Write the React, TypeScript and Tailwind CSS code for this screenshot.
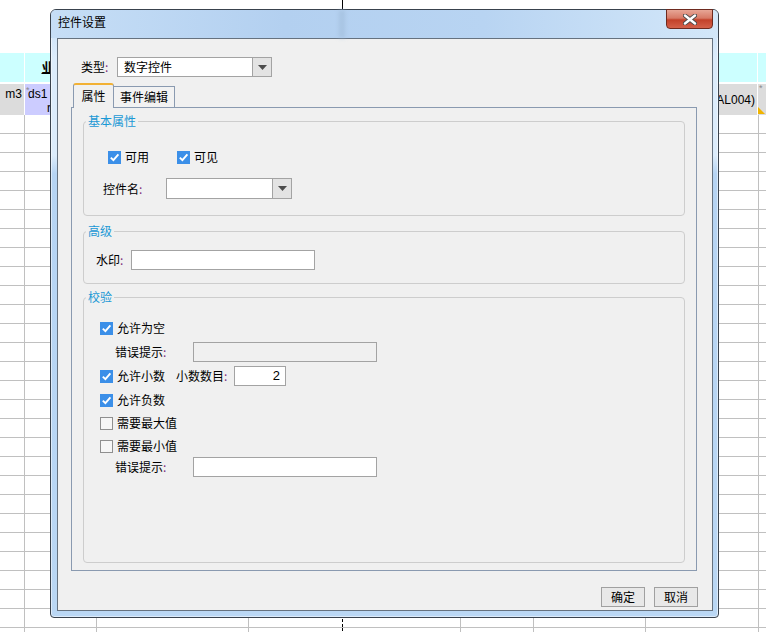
import React from 'react';

const GRID_CELLS = [
  'w-[25px] border-r border-[#c0c0c0]',
  'w-[72px] border-r border-[#c0c0c0]',
  'w-[152px] border-r border-[#c0c0c0]',
  'w-[94px] border-r border-dashed border-black',
  'w-[118px] border-r border-[#c0c0c0]',
  'w-[73px] border-r border-[#c0c0c0]',
  'w-[112px] border-r border-[#c0c0c0]',
  'w-[113px] border-r border-[#c0c0c0]',
  'flex-1',
];

const ROWS = Array.from({ length: 28 }, (_, i) => i);

// ── spreadsheet behind the dialog ──
function Sheet() {
  return (
    <div className="flex flex-col text-[12px] leading-[14px] text-black">
      <div className="flex h-[53px]">
        <div className="w-[342px]" />
        <div className="w-px bg-black" />
      </div>

      <div className="flex h-[29px] bg-[#ccffff]">
        <div className="w-[25px] border-r border-white" />
        <div className="flex w-[72px] items-center justify-center">
          <span className="text-[13px] font-bold underline">业务员</span>
        </div>
        <div className="w-[661px] border-r border-white" />
        <div className="flex-1" />
      </div>

      <div className="h-[2px]" />

      <div className="flex h-[31px]">
        <div className="w-[25px] border-r border-white bg-[#dcdcdc] pt-[3px] pr-[2px] text-right">m3</div>
        <div className="relative w-[72px] border-r border-white bg-[#ccccff] pt-[3px] pl-[3px]">
          <span className="absolute left-[1px] top-[-1px] text-[9px] text-[#8a8a8a]">*</span>
          <div>ds1 数量</div>
          <div className="pl-[19px]">rq)</div>
        </div>
        <div className="w-[548px]" />
        <div className="w-[113px] overflow-hidden border-r border-white bg-[#dcdcdc] pt-[9px] pr-[2px] text-right whitespace-nowrap">
          COUNT(AL004)
        </div>
        <div className="flex flex-1 flex-col justify-between bg-[#dcdcdc] pb-[1px]">
          <span className="-mt-[1px] pl-[1px] text-[9px] leading-[10px] text-[#8a8a8a]">*</span>
          <svg className="block" width="7" height="7" viewBox="0 0 7 7">
            <path d="M0 0L7 7H0z" fill="#f0b400" />
          </svg>
        </div>
      </div>

      {ROWS.map((r) => (
        <div key={r} className="flex h-[19px] border-b border-[#c0c0c0]">
          {GRID_CELLS.map((c, i) => (
            <div key={i} className={c} />
          ))}
        </div>
      ))}
    </div>
  );
}

function Colon() {
  return <span className="text-[#7d2e7d]">:</span>;
}

function Box({ on }: { on?: boolean }) {
  if (!on) return <span className="block h-[13px] w-[13px] shrink-0 border border-[#8f8f8f] bg-[#f6f6f6]" />;
  return (
    <span className="flex h-[13px] w-[13px] shrink-0 items-center justify-center bg-[#3b8fe8]">
      <svg width="11" height="11" viewBox="0 0 11 11">
        <path d="M1.8 5.6 L4.4 8.2 L9.4 2.4" fill="none" stroke="#fff" strokeWidth="1.9" />
      </svg>
    </span>
  );
}

function Combo({ className, value }: { className: string; value?: string }) {
  return (
    <div className={`flex border border-[#a3a3a3] bg-white ${className}`}>
      <div className="flex flex-1 items-center pl-[6px]">{value}</div>
      <div className="flex w-[19px] items-center justify-center border-l border-[#a3a3a3] bg-[#e3e3e3]">
        <svg width="9" height="5" viewBox="0 0 9 5">
          <path d="M0 0h9L4.5 5z" fill="#4b4b4b" />
        </svg>
      </div>
    </div>
  );
}

function Group({ title, className, children }: { title: string; className: string; children: React.ReactNode }) {
  return (
    <fieldset className={`mx-[11px] rounded-[4px] border border-[#cdcdcd] ${className}`}>
      <legend className="ml-[2px] px-[2px] text-[12px] leading-[16px] text-[#1a98d5]">{title}</legend>
      {children}
    </fieldset>
  );
}

function CheckRow({ on, label, className = '' }: { on?: boolean; label: string; className?: string }) {
  return (
    <div className={`flex items-center gap-[4px] ${className}`}>
      <Box on={on} />
      <span>{label}</span>
    </div>
  );
}

// ── dialog ──
function Dialog() {
  return (
    <div className="absolute left-[50px] top-[9px] flex h-[609px] w-[669px] flex-col rounded-t-[6px] rounded-b-[4px] border border-[#39424d] bg-[linear-gradient(180deg,#c6def6_0%,#dcecfb_8%,#dcecfb_24%,#b6d4f3_27%,#bad7f4_100%)] font-['Noto_Sans_CJK_SC',sans-serif] text-[12px] leading-[16px] text-black shadow-[0_0_0_1px_rgba(255,255,255,0.5)_inset]">
      <div className="relative h-[28px] rounded-t-[5px] bg-[linear-gradient(90deg,#c6def6,#b3d0f0_35%,#b8d4f2_65%,#d3e7f9)] pt-[4px] pl-[7px]">
        控件设置
        <div className="absolute left-[288px] top-0 h-full w-[6px] bg-[#9fbbd8] opacity-60 blur-[2px]" />
        <div className="absolute right-[5px] top-[-1px] flex h-[20px] w-[47px] items-center justify-center rounded-b-[4px] border border-[#6e2a1f] bg-[linear-gradient(180deg,#e7a696_0%,#d77a66_45%,#c2412a_55%,#d4614a_100%)]">
          <svg width="14" height="11" viewBox="0 0 14 11">
            <path d="M2 1.5L12 9.5M12 1.5L2 9.5" stroke="#4a4a4a" strokeWidth="4.2" strokeLinecap="round" />
            <path d="M2 1.5L12 9.5M12 1.5L2 9.5" stroke="#ffffff" strokeWidth="2.4" strokeLinecap="round" />
          </svg>
        </div>
      </div>

      <div className="ml-[6px] flex h-[573px] w-[656px] flex-col border border-[#66727f] bg-[#f0f0f0]">
        {/* type */}
        <div className="mt-[18px] flex h-[20px] items-center pl-[23px]">
          <span className="w-[36px]">
            类型<Colon />
          </span>
          <Combo className="h-[20px] w-[155px]" value="数字控件" />
        </div>

        {/* tabs */}
        <div className="mt-[6px] ml-[15px] flex h-[24px] items-end">
          <div className="relative z-10 -mb-px flex h-[25px] w-[41px] items-center justify-center rounded-t-[3px] border-x border-t-2 border-x-[#8a9ab0] border-t-[#f2b134] bg-[#f0f0f0] pb-[1px]">
            属性
          </div>
          <div className="flex h-[21px] w-[61px] items-center justify-center border-t border-r border-[#8a9ab0] bg-[#f2f2f2]">
            事件编辑
          </div>
        </div>

        <div className="ml-[13px] flex h-[464px] w-[626px] flex-col border border-[#8a9ab0] bg-[#f0f0f0]">
          <Group title="基本属性" className="mt-[5px] h-[103px]">
            <div className="mt-[18px] flex h-[20px] items-center pl-[24px]">
              <CheckRow on label="可用" className="w-[69px]" />
              <CheckRow on label="可见" />
            </div>
            <div className="mt-[11px] flex h-[21px] items-center pl-[19px]">
              <span className="w-[63px]">
                控件名<Colon />
              </span>
              <Combo className="h-[21px] w-[126px]" />
            </div>
          </Group>

          <Group title="高级" className="mt-[7px] h-[61px]">
            <div className="mt-[11px] flex h-[20px] items-center pl-[12px]">
              <span className="w-[35px]">
                水印<Colon />
              </span>
              <div className="h-[20px] w-[184px] border border-[#a3a3a3] bg-white" />
            </div>
          </Group>

          <Group title="校验" className="mt-[5px] h-[274px]">
            <div className="flex flex-col pl-[16px]">
              <CheckRow on label="允许为空" className="mt-[13px] h-[20px]" />
              <div className="mt-[4px] flex h-[20px] items-center pl-[15px]">
                <span className="w-[78px]">
                  错误提示<Colon />
                </span>
                <div className="h-[20px] w-[184px] border border-[#a3a3a3] bg-[#f0f0f0]" />
              </div>
              <div className="mt-[4px] flex h-[20px] items-center">
                <CheckRow on label="允许小数" className="w-[76px]" />
                <span className="w-[58px]">
                  小数数目<Colon />
                </span>
                <div className="flex h-[20px] w-[52px] items-center justify-end border border-[#a3a3a3] bg-white pr-[5px] font-['Liberation_Sans',sans-serif] text-[13px]">
                  2
                </div>
              </div>
              <CheckRow on label="允许负数" className="mt-[4px] h-[20px]" />
              <CheckRow label="需要最大值" className="mt-[3px] h-[20px]" />
              <CheckRow label="需要最小值" className="mt-[3px] h-[20px]" />
              <div className="mt-[1px] flex h-[20px] items-center pl-[15px]">
                <span className="w-[78px]">
                  错误提示<Colon />
                </span>
                <div className="h-[20px] w-[184px] border border-[#a3a3a3] bg-white" />
              </div>
            </div>
          </Group>
        </div>

        {/* buttons */}
        <div className="mt-[16px] flex justify-end gap-[9px] pr-[14px]">
          <button className="flex h-[20px] w-[44px] items-center justify-center border border-[#a0a0a0] bg-[#e8e8e8]">确定</button>
          <button className="flex h-[20px] w-[44px] items-center justify-center border border-[#a0a0a0] bg-[#e8e8e8]">取消</button>
        </div>
      </div>
    </div>
  );
}

export default function App() {
  return (
    <div className="relative h-[632px] w-[766px] overflow-hidden bg-white font-['Liberation_Sans','Noto_Sans_CJK_SC',sans-serif]">
      <Sheet />
      <Dialog />
    </div>
  );
}
